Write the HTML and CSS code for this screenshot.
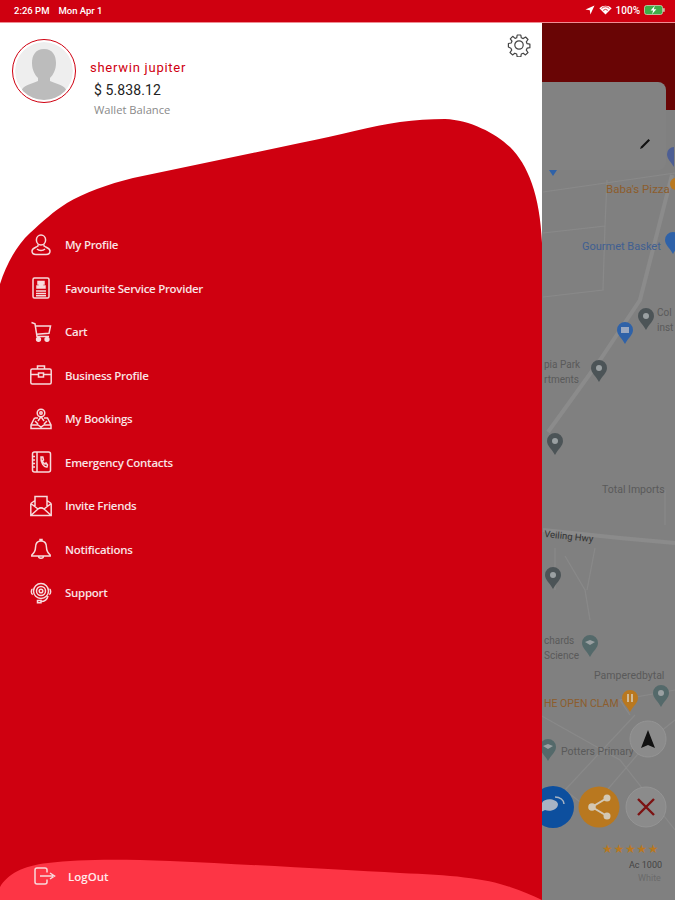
FILE: index.html
```html
<!DOCTYPE html>
<html lang="en">
<head>
	<meta charset="UTF-8">
	<title>Menu</title>
	<link rel="stylesheet" href="styles.css">
</head>
<body>
	<div class="screen">
		<div class="status">
			<span class="status-time">2:26 PM</span>
			<span class="status-date">Mon Apr 1</span>
			<span class="status-right">
				<svg width="10" height="10" viewBox="0 0 10 10"><path d="M9.5 .5 L.5 4.6 L4.8 5.2 L5.4 9.5 Z" fill="#fff"/></svg>
				<svg width="13" height="10" viewBox="0 0 13 10"><path d="M6.5 9.6 L.3 3.2 A9 9 0 0 1 12.7 3.2 Z" fill="#fff"/><path d="M2.6 3.4 A6 6 0 0 1 10.4 3.4 M4.2 5.4 A3.4 3.4 0 0 1 8.8 5.4" fill="none" stroke="#cf0010" stroke-width=".8"/></svg>
				<span>100%</span>
				<svg width="21" height="10" viewBox="0 0 21 10"><rect x=".5" y=".5" width="18" height="9" rx="2" fill="#3fae49" stroke="#cfe8c8" stroke-width=".7"/><rect x="19.2" y="3.2" width="1.4" height="3.6" fill="#cfe8c8"/><path d="M10.8 .8 L6.6 5.6 H9.2 L8 9.2 L12.4 4.2 H9.8 Z" fill="#fff"/></svg>
			</span>
		</div>
		<div class="body">
			<div class="drawer">
				<svg class="drawer-bg" width="542" height="877" viewBox="0 23 542 877">
					<path d="M0 284 C6 265 16 246 30 233 C42 222 54 211 67 203 C84 193 108 184 133 178 L300 143 C340 135 372 126 400 122 C415 120 430 119 445 119 C470 120 495 133 510 147 C528 165 540 195 542 243 V900 H0 Z" fill="#cf0010"/>
					<path d="M0 887 C8 874 22 866 48 863 C80 859 120 859 170 861 C260 865 340 870 400 873 C450 875 485 878 510 887 C522 891 532 895 542 900 H0 Z" fill="#fd3545"/>
				</svg>
				<svg class="gear" width="24" height="24" viewBox="0 0 24 24" fill="none" stroke="#444" stroke-width="1.2" stroke-linejoin="round">
					<circle cx="12" cy="12" r="4.2"/>
					<path d="M10.2 2h3.6l.5 2.8 1.9.8 2.4-1.6 2.4 2.5-1.7 2.3.8 1.9 2.8.5v3.5l-2.8.5-.8 1.9 1.7 2.4-2.5 2.4-2.3-1.7-1.9.8-.5 2.8h-3.6l-.5-2.8-1.9-.8-2.3 1.7-2.5-2.4 1.7-2.4-.8-1.9L1.4 14v-3.5l2.8-.5.8-1.9-1.7-2.3 2.4-2.5L8.1 5.4l1.6-.6z"/>
				</svg>
				<div class="user">
					<div class="avatar">
						<svg width="58" height="58" viewBox="0 0 58 58">
							<circle cx="29" cy="29" r="29" fill="#eee"/>
							<path d="M29 7 C20 7 17 14 17 21 C17 28 20 33 23 36 V39 C17 42 7 43 6 50 C12 55 20 58 29 58 C38 58 46 55 52 50 C51 43 41 42 35 39 V36 C38 33 41 28 41 21 C41 14 38 7 29 7 Z" fill="#bcbcbc"/>
						</svg>
					</div>
					<div class="user-info">
						<div class="user-name">sherwin jupiter</div>
						<div class="user-balance">$ 5.838.12</div>
						<div class="user-label">Wallet Balance</div>
					</div>
				</div>
				<ul class="menu">
					<li>
						<svg class="ico" width="22" height="22" viewBox="0 0 22 22"><ellipse cx="11" cy="6" rx="4.6" ry="5"/><path d="M8 10.5 V12 C6 13.5 2 14 2 17 C2 19 3.5 20.5 6 20.5 H16 C18.5 20.5 20 19 20 17 C20 14 16 13.5 14 12 V10.5 M7 15 C9 17 13 17 15 15"/></svg>
						<span>My Profile</span>
					</li>
					<li>
						<svg class="ico" width="22" height="22" viewBox="0 0 22 22"><rect x="3" y="1" width="16" height="20" rx="1.5"/><path d="M8 4.5 H14 V7 H12.5 V9 H15 V11 H7 V9 H9.5 V7 H8 Z" fill="#f7dadc"/><path d="M6 14 H16 M6 16.5 H16 M6 18.8 H16"/></svg>
						<span>Favourite Service Provider</span>
					</li>
					<li>
						<svg class="ico" width="22" height="22" viewBox="0 0 22 22"><path d="M1.5 1.5 L5 2.8 L7 15.5 H19 M5.2 5 H20.5 L19 12.3 L6.5 13.2"/><circle cx="8.5" cy="18.3" r="1.9" fill="#f7dadc"/><circle cx="17" cy="18.3" r="1.9" fill="#f7dadc"/></svg>
						<span>Cart</span>
					</li>
					<li>
						<svg class="ico" width="22" height="22" viewBox="0 0 22 22"><rect x=".8" y="5" width="20.4" height="15" rx="1.5"/><path d="M7.5 5 V2 H14.5 V5 M.8 10.5 H8.5 M13.5 10.5 H21.2"/><rect x="8.5" y="9" width="5" height="4"/></svg>
						<span>Business Profile</span>
					</li>
					<li>
						<svg class="ico" width="22" height="22" viewBox="0 0 22 22"><circle cx="11" cy="5" r="3.8"/><circle cx="11" cy="5" r="1.2"/><path d="M11 8.8 L8 13 M11 8.8 L14 13 M4.5 10 H8 M14 10 H17.5 L21 17 V20.5 H1 V17 L4.5 10 M1 17 H8 L11 19 L14 17 H21 M5 13 L8 16 M17 13 L14 16"/></svg>
						<span>My Bookings</span>
					</li>
					<li>
						<svg class="ico" width="22" height="22" viewBox="0 0 22 22"><rect x="2.5" y="1" width="18" height="20" rx="2"/><path d="M7 1 V21 M2.5 5.5 H5 M2.5 9 H5 M2.5 12.5 H5 M2.5 16 H5 M11 6 L12.8 6 L13.5 9 L12.3 10 C12.8 11.5 13.6 12.3 15 13 L16 12 L17.5 14 L17 16 C14 16.5 10.5 12 11 6 Z"/></svg>
						<span>Emergency Contacts</span>
					</li>
					<li>
						<svg class="ico" width="22" height="22" viewBox="0 0 22 22"><path d="M.8 8.5 L5 5.5 M21.2 8.5 L17 5.5 M.8 8.5 V20.5 H21.2 V8.5 M5 11 V1.5 H17 V11 M.8 8.5 L8 14 M21.2 8.5 L14 14 M.8 20.5 L8 14 C10 12.5 12 12.5 14 14 L21.2 20.5"/></svg>
						<span>Invite Friends</span>
					</li>
					<li>
						<svg class="ico" width="22" height="22" viewBox="0 0 22 22"><path d="M11 3 C7 3 5.5 6 5.5 9.5 C5.5 13 4 15 1.8 17 V18 H20.2 V17 C18 15 16.5 13 16.5 9.5 C16.5 6 15 3 11 3 Z M10 3 V1.5 H12 V3 M8.5 18 C8.5 21 13.5 21 13.5 18"/></svg>
						<span>Notifications</span>
					</li>
					<li>
						<svg class="ico" width="22" height="22" viewBox="0 0 22 22"><circle cx="11" cy="9" r="7.5"/><circle cx="11" cy="9" r="4.5"/><circle cx="11" cy="9" r="1.8"/><path d="M2.5 7 C1 7.5 .8 12 2.8 12.5 M19.5 7 C21 7.5 21.2 12 19.2 12.5 M18 14 C17 18 14 19.5 11 19.5 M7.5 18.5 H11 V20.8 H7.5 Z"/></svg>
						<span>Support</span>
					</li>
				</ul>
				<div class="logout">
					<svg class="ico" width="22" height="18" viewBox="0 0 22 18"><path d="M13 5.5 V3 C13 1.8 12.2 1 11 1 H3 C1.8 1 1 1.8 1 3 V15 C1 16.2 1.8 17 3 17 H11 C12.2 17 13 16.2 13 15 V12.5 M6 9 H19 M16 6 L20.5 9 L16 12"/></svg>
					<span>LogOut</span>
				</div>
			</div>
			<div class="side">
				<!-- map behind the drawer, coordinates are the map itself -->
				<svg class="map" width="133" height="877" viewBox="542 23 133 877">
					<rect x="542" y="23" width="133" height="877" fill="#808080"/>
					<g fill="none" stroke="#898989" stroke-width="1.2">
						<path d="M543 192 L675 173 M543 233 L605 226 L607 180 M543 297 L603 290 L605 226"/>
						<path d="M665 490 V525"/>
						<path d="M555 548 V590 M565 556 L585 590 L590 620 M595 548 L587 590"/>
						<path d="M540 715 L620 760 L675 830 M635 715 L565 790 L590 810 L650 740 L675 720"/>
						<path d="M630 715 L620 700 L675 690"/>
					</g>
					<g fill="none" stroke="#8b8b8b" stroke-width="4">
						<path d="M672 175 L640 300 L600 360 L548 432"/>
						<path d="M543 530 L620 538 L675 543"/>
					</g>
					<g class="map-label">
						<text x="606" y="193" fill="#8d5d2c" font-size="11.5">Baba's Pizza</text>
						<text x="582" y="250" fill="#3f5f92" font-size="11">Gourmet Basket</text>
						<text x="657" y="316" fill="#5a5a5a" font-size="10">Col</text>
						<text x="657" y="331" fill="#5a5a5a" font-size="10">inst</text>
						<text x="544" y="368" fill="#5a5a5a" font-size="10">pia Park</text>
						<text x="544" y="383" fill="#5a5a5a" font-size="10">rtments</text>
						<text x="602" y="493" fill="#5a5a5a" font-size="10.5">Total Imports</text>
						<text x="544" y="537" fill="#333" font-size="9.5" transform="rotate(6 544 537)">Veiling Hwy</text>
						<text x="544" y="644" fill="#5a5a5a" font-size="10">chards</text>
						<text x="544" y="659" fill="#5a5a5a" font-size="10">Science</text>
						<text x="594" y="679" fill="#5a5a5a" font-size="10.5">Pamperedbytal</text>
						<text x="544" y="707" fill="#8d5d2c" font-size="10.5">HE OPEN CLAM</text>
						<text x="561" y="755" fill="#5a5a5a" font-size="10.5">Potters Primary</text>
						<text x="629" y="868" fill="#444" font-size="9">Ac 1000</text>
						<text x="638" y="881" fill="#6a6a6a" font-size="9">White</text>
					</g>
					<!-- pins -->
					<g>
						<path d="M646 308 a8 8 0 0 1 8 8 c0 5 -5 8 -8 14 c-3 -6 -8 -9 -8 -14 a8 8 0 0 1 8 -8 Z" fill="#4c5457"/>
						<circle cx="646" cy="316" r="3" fill="#9aa0a2"/>
						<path d="M625 322 a8 8 0 0 1 8 8 c0 5 -5 8 -8 14 c-3 -6 -8 -9 -8 -14 a8 8 0 0 1 8 -8 Z" fill="#2f62a8"/>
						<rect x="621" y="327" width="8" height="6" fill="#9aa8c0"/>
						<path d="M599 360 a8 8 0 0 1 8 8 c0 5 -5 8 -8 14 c-3 -6 -8 -9 -8 -14 a8 8 0 0 1 8 -8 Z" fill="#4c5457"/>
						<circle cx="599" cy="368" r="3" fill="#9aa0a2"/>
						<path d="M555 433 a8 8 0 0 1 8 8 c0 5 -5 8 -8 14 c-3 -6 -8 -9 -8 -14 a8 8 0 0 1 8 -8 Z" fill="#4c5457"/>
						<circle cx="555" cy="441" r="3" fill="#9aa0a2"/>
						<path d="M553 567 a8 8 0 0 1 8 8 c0 5 -5 8 -8 14 c-3 -6 -8 -9 -8 -14 a8 8 0 0 1 8 -8 Z" fill="#4c5457"/>
						<circle cx="553" cy="575" r="3" fill="#9aa0a2"/>
						<path d="M590 635 a8 8 0 0 1 8 8 c0 5 -5 8 -8 14 c-3 -6 -8 -9 -8 -14 a8 8 0 0 1 8 -8 Z" fill="#54696a"/>
						<path d="M585 642 L590 640 L595 642 L590 645 Z" fill="#9aa0a2"/>
						<path d="M661 685 a8 8 0 0 1 8 8 c0 5 -5 8 -8 14 c-3 -6 -8 -9 -8 -14 a8 8 0 0 1 8 -8 Z" fill="#54696a"/>
						<circle cx="661" cy="693" r="3" fill="#9aa0a2"/>
						<path d="M630 690 a8 8 0 0 1 8 8 c0 5 -5 8 -8 14 c-3 -6 -8 -9 -8 -14 a8 8 0 0 1 8 -8 Z" fill="#b9781f"/>
						<path d="M628 694 V702 M632 694 V702" stroke="#d8cfc0" stroke-width="1.5"/>
						<path d="M548 739 a8 8 0 0 1 8 8 c0 5 -5 8 -8 14 c-3 -6 -8 -9 -8 -14 a8 8 0 0 1 8 -8 Z" fill="#54696a"/>
						<path d="M543 746 L548 744 L553 746 L548 749 Z" fill="#9aa0a2"/>
						<path d="M673 232 a8 8 0 0 1 8 8 c0 5 -5 8 -8 14 c-3 -6 -8 -9 -8 -14 a8 8 0 0 1 8 -8 Z" fill="#2f62a8"/>
						<circle cx="676" cy="184" r="6" fill="#b9781f"/>
						<path d="M549 170 H557 L553 176 Z" fill="#2f62a8"/>
					</g>
					<!-- buttons -->
					<circle cx="648" cy="739" r="18" fill="#8b8b8b" stroke="#949494"/>
					<path d="M648 730 L655 748 L648 745 L641 748 Z" fill="#111"/>
					<circle cx="553" cy="807" r="21" fill="#0d4f9e"/>
					<path d="M542 803 C544 798 556 798 558 804 C558 810 550 812 545 810 L541 812 Z" fill="#a8b4c4"/>
					<path d="M555 797 C560 797 564 800 564 804" fill="none" stroke="#a8b4c4" stroke-width="1.5"/>
					<circle cx="599" cy="807" r="20.5" fill="#b9781f"/>
					<path d="M607 798 L592 807 L607 816" fill="none" stroke="#d3c8b4" stroke-width="2"/>
					<circle cx="607" cy="798" r="3.5" fill="#d3c8b4"/>
					<circle cx="592" cy="807" r="3.8" fill="#d3c8b4"/>
					<circle cx="607" cy="816" r="3.5" fill="#d3c8b4"/>
					<circle cx="646" cy="807" r="20" fill="#8b8b8b" stroke="#949494"/>
					<path d="M638 799 L654 815 M654 799 L638 815" stroke="#7c1212" stroke-width="2.4"/>
					<g class="stars" fill="#b9781f" font-size="12">
						<text x="602" y="853">★★★★★</text>
					</g>
				</svg>
				<div class="side-head"></div>
				<div class="side-card">
					<svg class="pen" width="12" height="12" viewBox="0 0 12 12"><path d="M9.5 1 L11 2.5 L3.5 10 L1 11 L2 8.5 Z" fill="#111"/></svg>
				</div>
				<svg class="card-pin" width="9" height="22" viewBox="0 0 9 22"><path d="M8 0 a7 7 0 0 0 -7 7 c0 5 4 8 7 13 Z" fill="#4d5e94"/></svg>
			</div>
		</div>
	</div>
</body>
</html>
```

FILE: styles.css
```css
*{margin: 0;padding: 0;box-sizing: border-box;}
body{font-family: "Open Sans", "Liberation Sans", sans-serif;background: #808080;}
.screen{width: 675px;height: 900px;overflow: hidden;display: flex;flex-direction: column;}

/* status bar */
.status{height: 23px;background: #cf0010;color: #fff;font-size: 9.5px;display: flex;align-items: center;padding: 0 10px 2px 14px;border-bottom: 1px solid #ef8d93;font-family: "Roboto", sans-serif;font-weight: 500;}
.status-date{margin-left: 9px;}
.status-right{margin-left: auto;display: flex;align-items: center;gap: 4px;font-size: 10px;}

.body{flex: 1;display: flex;min-height: 0;}

/* drawer */
.drawer{width: 542px;flex: none;position: relative;background: #fff;display: flex;flex-direction: column;}
.drawer-bg{position: absolute;left: 0;top: 0;}
.gear{position: absolute;left: 507px;top: 10px;}
.user{position: relative;display: flex;align-items: flex-start;padding: 16px 0 0 12px;height: 200px;}
.avatar{width: 64px;height: 64px;border: 1.5px solid #cf0010;border-radius: 50%;display: flex;align-items: center;justify-content: center;overflow: hidden;flex: none;}
.avatar svg{border-radius: 50%;}
.user-info{margin: 21px 0 0 14px;}
.user-name{color: #cf0010;font: 400 13px/16px "Roboto", sans-serif;letter-spacing: .75px;}
.user-balance{color: #222;font: 400 14px/18px "Roboto", sans-serif;letter-spacing: .1px;margin: 5px 0 0 4px;}
.user-label{color: #8a8a8a;font-size: 11.2px;line-height: 16px;margin: 3px 0 0 4px;}

.menu{position: relative;list-style: none;padding-left: 30px;}
.menu li{height: 43.5px;display: flex;align-items: center;gap: 13px;color: #f9e4e5;font-size: 11.5px;font-weight: 600;letter-spacing: -.28px;}
.ico{fill: none;stroke: #f7dadc;stroke-width: 1.5;flex: none;}
.logout{position: relative;margin-top: auto;height: 48px;padding-left: 34px;display: flex;align-items: center;gap: 12px;color: #ffeaeb;font-size: 11.5px;font-weight: 600;}

/* right part, dimmed screen behind the drawer */
.side{flex: 1;position: relative;overflow: hidden;}
.map{position: absolute;left: 0;top: 0;}
.map-label text{font-family: "Roboto", sans-serif;}
.stars text{font-family: "DejaVu Sans", sans-serif;letter-spacing: .7px;}
.side-head{position: absolute;left: 0;top: 0;right: 0;height: 87px;background: #690505;}
.side-card{position: absolute;left: 0;top: 59px;width: 124px;height: 88px;background: #828282;border-radius: 0 8px 8px 0;}
.pen{position: absolute;right: 15px;bottom: 20px;}
.card-pin{position: absolute;left: 124px;top: 124px;}
```
